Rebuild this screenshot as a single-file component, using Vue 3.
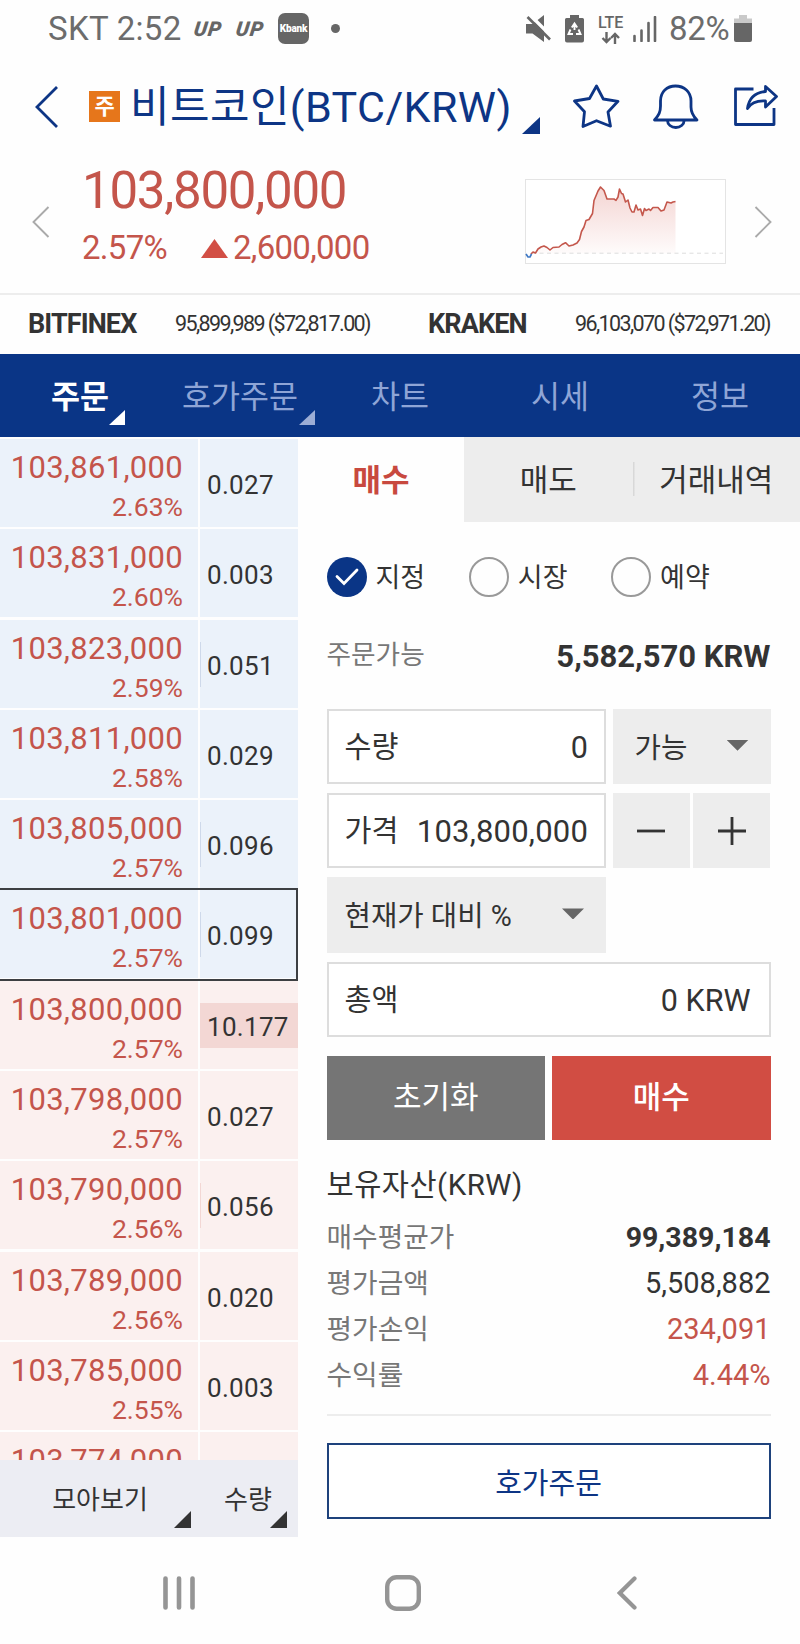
<template>
    <div class="phone">
        <div class="status-bar">
            <span class="carrier">SKT 2:52</span>
            <span class="up-logo">UP</span>
            <span class="up-logo second">UP</span>
            <span class="kbank">Kbank</span>
            <span class="dot"></span>
            <div class="status-right">
                <svg class="mute" width="26" height="28" viewBox="126 13.5 26 28">
                    <path d="M126 22.5h6.5l11.5-9v27l-11.5-8.500h-6.500z" fill="#666" />
                    <path d="M129 12.500l24 24" stroke="#fff" stroke-width="3.500" />
                    <path d="M127.500 15.500l22.500 22.500" stroke="#666" stroke-width="2.600" />
                </svg>
                <svg class="saver" width="19" height="28" viewBox="0 0 19 28">
                    <path d="M5 0h9v3h3.500q1.500 0 1.500 1.500v21q0 2-2 2h-15q-2 0-2-2v-21q0-1.500 1.500-1.500h3.500z" fill="#666" />
                    <path d="M6.800 12.500l2.700-4 2.700 4M13.500 14.500l2 4.500h-4.500M5.500 14.500l-2 4.500h4.500M9.500 10v5" fill="none" stroke="#fff" stroke-width="1.900" />
                </svg>
                <div class="lte">
                    <span>LTE</span>
                    <svg width="20" height="12" viewBox="0 0 20 12">
                        <path d="M5.500 0v9.500M1.500 6l4 4 4-4M14 12v-9.500M10 6l4-4 4 4" fill="none" stroke="#666" stroke-width="2.400" />
                    </svg>
                </div>
                <svg class="signal" width="24" height="26" viewBox="0 0 24 26">
                    <path d="M1.500 20v5M8.500 14.500v10.500M15.500 7v18M22 1v24" stroke="#666" stroke-width="2.600" stroke-linecap="round" />
                </svg>
                <span class="percent">82%</span>
                <svg class="battery" width="18" height="27" viewBox="0 0 18 27">
                    <path d="M5 0h8v3.500h5v5h-18v-5h5z" fill="#c9c9c9" />
                    <path d="M0 8h18v17q0 2-2 2h-14q-2 0-2-2z" fill="#666" />
                </svg>
            </div>
        </div>

        <div class="header">
            <svg class="back" width="24" height="42" viewBox="0 0 24 42">
                <path d="M22 1L2 21l20 20" fill="none" stroke="#0d3585" stroke-width="2.800" />
            </svg>
            <span class="market-tag">주</span>
            <h1>비트코인(BTC/KRW)</h1>
            <svg class="corner-title" width="18" height="17" viewBox="0 0 18 17"><path d="M18 0v17h-18z" fill="#0d3585" /></svg>
            <svg class="star" width="47" height="46" viewBox="172 83 47 46">
                <path d="M195.500 86l6.800 13 14.700 2.300-10 10.700 2.500 14.200-14-5.500-13.500 5.800 1.500-14.800-10-10.700 15-2.500z" />
            </svg>
            <svg class="bell" width="47" height="46" viewBox="252 83 47 46">
                <path d="M254.500 120C259 115 260.500 112 260.500 106V101C260.500 91.500 267 86 275.500 86S291 91.500 291 101V107C291 113 293 116 297 120Z" />
                <path d="M267.500 120.500a8.300 7 0 0 0 16.600 0" />
            </svg>
            <svg class="share" width="46" height="46" viewBox="333 83 46 46">
                <path d="M353.500 89H335.500V124.500H374V108" />
                <path d="M365.500 86.500L376.500 96.500L365.500 107V101C358 100.500 351 103 347.500 108.500C349 98 355 92.500 365.500 91.500Z" />
            </svg>
        </div>

        <div class="quote">
            <svg class="prev" width="18" height="32" viewBox="0 0 18 32">
                <path d="M16.500 1L1.500 16l15 15" fill="none" stroke="#aaa" stroke-width="1.900" />
            </svg>
            <div class="quote-text">
                <div class="quote-price">103,800,000</div>
                <div class="quote-change">
                    <span>2.57%</span>
                    <svg width="27" height="19" viewBox="0 0 27 19"><path d="M13.500 0L27 19H0z" fill="#d24f45" /></svg>
                    <span>2,600,000</span>
                </div>
            </div>
            <svg class="mini-chart" width="202" height="86" viewBox="125 178.500 202 86">
                <defs>
                    <linearGradient id="fade" x1="0" y1="0" x2="0" y2="1">
                        <stop offset="0" stop-color="#d24f45" stop-opacity="0.24" />
                        <stop offset="1" stop-color="#d24f45" stop-opacity="0.02" />
                    </linearGradient>
                </defs>
                <rect x="125.500" y="179" width="200" height="84" fill="#fff" stroke="#e4e4e4" />
                <path :d="chartLine + 'V253H132Z'" fill="url(#fade)" />
                <path d="M132 252.700H323" stroke="#ddd" stroke-dasharray="4 3.500" />
                <path :d="chartLine" fill="none" stroke="#c4574c" stroke-width="1.600" stroke-linejoin="round" />
                <path d="M126 253.500l2 3h2l1.500-3" fill="none" stroke="#3f78c4" stroke-width="1.700" />
            </svg>
            <svg class="next" width="18" height="32" viewBox="0 0 18 32">
                <path d="M1.500 1l15 15-15 15" fill="none" stroke="#aaa" stroke-width="1.900" />
            </svg>
        </div>

        <div class="exchanges">
            <div v-for="ex in exchanges" :key="ex.name" class="exchange">
                <b>{{ ex.name }}</b>
                <span>{{ ex.price }}</span>
            </div>
        </div>

        <div class="main-tabs">
            <div v-for="(tab, i) in mainTabs" :key="tab" class="main-tab" :class="{ active: i === 0 }">
                <span>{{ tab }}</span>
                <svg v-if="i < 2" class="tab-corner" :class="'corner-' + i" width="16" height="15" viewBox="0 0 16 15">
                    <path d="M16 0v15h-16z" fill="currentColor" />
                </svg>
            </div>
        </div>

        <div class="content">
            <div class="book">
                <div class="book-list">
                    <div v-for="row in orders" :key="row.price" class="book-row" :class="[row.side, { current: row.current }]">
                        <div class="price-cell">
                            <div class="price">{{ row.price }}</div>
                            <div class="rate">{{ row.rate }}</div>
                        </div>
                        <div class="qty-cell">
                            <div class="qty-bar" :style="{ width: barWidth(row.qty) }"></div>
                            <span>{{ row.qty }}</span>
                        </div>
                    </div>
                </div>
                <div class="book-footer">
                    <div class="group">모아보기<i class="fold"></i></div>
                    <div class="amount">수량<i class="fold"></i></div>
                </div>
            </div>

            <div class="order">
                <div class="order-tabs">
                    <div class="order-tab active">매수</div>
                    <div class="order-tab">매도</div>
                    <div class="order-tab history">거래내역</div>
                </div>

                <div class="form">
                    <div class="types">
                        <div v-for="(type, i) in orderTypes" :key="type" class="type" @click="selected = i">
                            <span class="radio" :class="{ checked: selected === i }">
                                <svg v-if="selected === i" width="24" height="18" viewBox="0 0 24 18">
                                    <path d="M2 8.500l7 7L22 2" fill="none" stroke="#fff" stroke-width="2.800" stroke-linecap="round" />
                                </svg>
                            </span>
                            <span class="type-label">{{ type }}</span>
                        </div>
                    </div>

                    <div class="available">
                        <span>주문가능</span>
                        <b>5,582,570 KRW</b>
                    </div>

                    <div class="field-row">
                        <div class="field"><span>수량</span><em>0</em></div>
                        <div class="select able"><span>가능</span><i class="caret"></i></div>
                    </div>
                    <div class="field-row">
                        <div class="field"><span>가격</span><em class="wide">103,800,000</em></div>
                        <div class="steps">
                            <button class="step" aria-label="minus">
                                <svg width="30" height="30" viewBox="0 0 30 30"><path d="M1 15h28" stroke="#333" stroke-width="2.800" /></svg>
                            </button>
                            <button class="step" aria-label="plus">
                                <svg width="30" height="30" viewBox="0 0 30 30"><path d="M1 15h28M15 1v28" stroke="#333" stroke-width="2.800" /></svg>
                            </button>
                        </div>
                    </div>
                    <div class="field-row">
                        <div class="select ratio"><span>현재가 대비 %</span><i class="caret"></i></div>
                    </div>
                    <div class="field-row">
                        <div class="field total"><span>총액</span><em>0 KRW</em></div>
                    </div>

                    <div class="actions">
                        <button class="reset">초기화</button>
                        <button class="buy">매수</button>
                    </div>

                    <div class="assets">
                        <h2>보유자산(KRW)</h2>
                        <div v-for="asset in assets" :key="asset.label" class="asset">
                            <span>{{ asset.label }}</span>
                            <span class="value" :class="asset.style">{{ asset.value }}</span>
                        </div>
                    </div>

                    <button class="quick">호가주문</button>
                </div>
            </div>
        </div>

        <div class="system-nav">
            <svg width="32" height="34" viewBox="0 0 32 34">
                <path d="M2.500 2.500v29M16 2.500v29M29.500 2.500v29" stroke="#959595" stroke-width="4.600" stroke-linecap="round" />
            </svg>
            <svg class="home" width="36" height="36" viewBox="0 0 36 36">
                <rect x="2.200" y="2.200" width="31.600" height="31.600" rx="9.500" fill="none" stroke="#959595" stroke-width="4.400" />
            </svg>
            <svg width="20" height="34" viewBox="0 0 20 34">
                <path d="M17.500 2.500L2.800 17l14.700 14.500" fill="none" stroke="#959595" stroke-width="4.200" stroke-linecap="round" />
            </svg>
        </div>
    </div>
</template>

<script setup>
import { ref } from 'vue';

const selected = ref(0);
const orderTypes = ['지정', '시장', '예약'];
const mainTabs = ['주문', '호가주문', '차트', '시세', '정보'];

const exchanges = [
    { name: 'BITFINEX', price: '95,899,989 ($72,817.00)' },
    { name: 'KRAKEN', price: '96,103,070 ($72,971.20)' },
];

const orders = [
    { price: '103,861,000', rate: '2.63%', qty: '0.027', side: 'ask' },
    { price: '103,831,000', rate: '2.60%', qty: '0.003', side: 'ask' },
    { price: '103,823,000', rate: '2.59%', qty: '0.051', side: 'ask' },
    { price: '103,811,000', rate: '2.58%', qty: '0.029', side: 'ask' },
    { price: '103,805,000', rate: '2.57%', qty: '0.096', side: 'ask' },
    { price: '103,801,000', rate: '2.57%', qty: '0.099', side: 'ask', current: true },
    { price: '103,800,000', rate: '2.57%', qty: '10.177', side: 'bid' },
    { price: '103,798,000', rate: '2.57%', qty: '0.027', side: 'bid' },
    { price: '103,790,000', rate: '2.56%', qty: '0.056', side: 'bid' },
    { price: '103,789,000', rate: '2.56%', qty: '0.020', side: 'bid' },
    { price: '103,785,000', rate: '2.55%', qty: '0.003', side: 'bid' },
    { price: '103,774,000', rate: '', qty: '', side: 'bid' },
];

const assets = [
    { label: '매수평균가', value: '99,389,184', style: 'bold' },
    { label: '평가금액', value: '5,508,882', style: '' },
    { label: '평가손익', value: '234,091', style: 'red' },
    { label: '수익률', value: '4.44%', style: 'red' },
];

const maxQty = Math.max(...orders.map((row) => Number(row.qty)));

function barWidth(qty) {
    return Math.round((Number(qty) / maxQty) * 100) + '%';
}

const chartLine =
    'M131 253.500L133 251.500L135.500 252.500L138 248.500L141 246.500L144 245.500L147 247L150 249.500L153 247L159 246.500L162 244L165.500 242.200' +
    'L169 245.500L173 244.500L177 242.500L179.500 239L181.500 231L184 226.500L186 220L189 219L192.500 213L194 200L198 190.500L200.500 186.500' +
    'L204 190L207 198.500L214 198.500L216 199.800L218 196.500L219.500 188.500L221.500 193L223 193.500L225.500 201.500L228 199.500L230 207.500' +
    'L232 211.500L234 211.500L236 204.500L238 209.500L240.500 208.500L242.500 215L244.500 208L246 210L249 208.500L250.500 210L253 207' +
    'L258 207L261 210.500L264 209.500L267 201.500L271 202.500L273 201.500L275.500 201';
</script>

<style>
body {
    margin: 0;
    background: #fefefe;
}
</style>

<style scoped>
.phone {
    width: 800px;
    height: 1644px;
    overflow: hidden;
    display: flex;
    flex-direction: column;
    background: #fefefe;
    color: #333;
    font-family: Roboto, "Noto Sans CJK KR", sans-serif;
}

.phone * {
    box-sizing: border-box;
}

svg {
    display: block;
    flex-shrink: 0;
}

button {
    border: 0;
    padding: 0;
    font-family: inherit;
}

.status-bar {
    height: 59px;
    display: flex;
    align-items: center;
    padding: 0 48px;
    color: #6c6c6c;
    font-size: 33px;
    line-height: 57px;
    flex-shrink: 0;
    padding-bottom: 2px;
}

.carrier {
    width: 146px;
    white-space: nowrap;
    letter-spacing: 0.3px;
}

.up-logo {
    width: 42px;
    font-size: 20.5px;
    font-weight: 900;
    font-style: italic;
    line-height: 30px;
    letter-spacing: 1px;
    color: #666;
    transform: skewX(-8deg);
}

.kbank {
    width: 31px;
    height: 31px;
    border-radius: 7px;
    background: #666;
    color: #fff;
    font-size: 10px;
    font-weight: 900;
    line-height: 31px;
    text-align: center;
    letter-spacing: -0.2px;
}

.dot {
    width: 9px;
    height: 9px;
    border-radius: 50%;
    margin-left: 22px;
    background: #666;
}

.status-right {
    margin-left: auto;
    display: flex;
    align-items: center;
}

.saver {
    margin-left: 13px;
}

.lte {
    width: 27px;
    margin: 0 8px 0 14px;
    height: 28px;
    font-size: 16px;
    font-weight: 500;
    line-height: 15px;
    color: #666;
}

.lte span {
    display: block;
    letter-spacing: -0.1px;
}

.lte svg {
    margin: 2px 0 0 3px;
}

.signal {
    margin-right: 12px;
}

.percent {
    width: 65px;
    white-space: nowrap;
    letter-spacing: -0.3px;
}

.header {
    height: 97px;
    display: flex;
    align-items: center;
    padding: 0 0 2px 35px;
    flex-shrink: 0;
}

.market-tag {
    width: 31px;
    height: 31px;
    margin-left: 30px;
    background: #e6761b;
    color: #fff;
    font-size: 22px;
    font-weight: 700;
    line-height: 31px;
    text-align: center;
}

h1 {
    margin: 0 0 0 10px;
    width: 392px;
    font-size: 43px;
    font-weight: 400;
    line-height: 96px;
    letter-spacing: 0.4px;
    white-space: nowrap;
    color: #0d3585;
}

.corner-title {
    margin-top: 37px;
}

.star,
.bell,
.share {
    fill: none;
    stroke: #0d3585;
    stroke-width: 2.8;
    stroke-linejoin: round;
    margin-top: -2px;
}

.star {
    margin-left: 33px;
}

.bell {
    margin-left: 32px;
}

.share {
    margin-left: 34px;
}

.quote {
    height: 139px;
    display: flex;
    align-items: center;
    padding: 0 28px 6px 32px;
    border-bottom: 2px solid #ededed;
    flex-shrink: 0;
}

.quote-text {
    margin: -6px 0 0 32px;
    width: 443px;
    color: #c4554b;
}

.quote-price {
    font-size: 51px;
    line-height: 58px;
    letter-spacing: -1.25px;
}

.quote-change {
    display: flex;
    align-items: center;
    font-size: 33px;
    line-height: 56px;
    letter-spacing: -0.7px;
}

.quote-change svg {
    margin: 1px 5px 0 34px;
}

.next {
    margin-left: auto;
}

.exchanges {
    height: 59px;
    display: flex;
    flex-shrink: 0;
}

.exchange {
    width: 400px;
    display: flex;
    justify-content: space-between;
    padding: 0 30px 0 28px;
    line-height: 58px;
    white-space: nowrap;
}

.exchange b {
    font-size: 27px;
    letter-spacing: -0.9px;
}

.exchange span {
    font-size: 21.5px;
    letter-spacing: -1.6px;
}

.main-tabs {
    height: 83px;
    display: flex;
    background: #0a3586;
    flex-shrink: 0;
}

.main-tab {
    position: relative;
    width: 160px;
    color: #8fa5d6;
    font-size: 31.5px;
    line-height: 88px;
    text-align: center;
}

.main-tab.active {
    color: #fff;
    font-weight: 700;
}

.tab-corner {
    position: absolute;
    top: 56px;
}

.corner-0 {
    left: 109px;
}

.corner-1 {
    left: 139px;
    color: #9cadd5;
}

.content {
    height: 1100px;
    display: flex;
    flex-shrink: 0;
}

.book {
    width: 298px;
    display: flex;
    flex-direction: column;
    flex-shrink: 0;
}

.book-list {
    height: 1023px;
    padding-top: 2px;
    overflow: hidden;
}

.book-row {
    position: relative;
    display: flex;
    gap: 2px;
    height: 90.3px;
    padding-bottom: 2.3px;
}

.book-row.current::after {
    content: "";
    position: absolute;
    top: -2px;
    bottom: 0;
    left: -2px;
    right: 0;
    border: 2px solid #3c3f42;
}

.price-cell {
    width: 198px;
    padding: 10px 15px 0 0;
    text-align: right;
    color: #c4554b;
}

.ask > div {
    background: #ebf2fa;
}

.bid > div {
    background: #fbf0ef;
}

.price {
    font-size: 31px;
    line-height: 38px;
    letter-spacing: 0.3px;
}

.rate {
    font-size: 26.5px;
    line-height: 39px;
}

.qty-cell {
    position: relative;
    width: 98px;
    padding-left: 7px;
    font-size: 26px;
    line-height: 93px;
    letter-spacing: 0.3px;
}

.qty-cell span {
    position: relative;
}

.qty-bar {
    position: absolute;
    top: 22px;
    left: 0;
    height: 45px;
}

.ask .qty-bar {
    background: #ced9ea;
}

.bid .qty-bar {
    background: #f3d7d4;
}

.book-footer {
    height: 77px;
    display: flex;
    background: #ecedf3;
    font-size: 26px;
    line-height: 81px;
    text-align: center;
}

.group {
    position: relative;
    width: 200px;
}

.amount {
    position: relative;
    width: 98px;
    padding-right: 2px;
}

.fold {
    position: absolute;
    right: 9px;
    bottom: 9px;
    width: 17px;
    height: 17px;
    background: #333;
    clip-path: polygon(100% 0, 100% 100%, 0 100%);
}

.amount .fold {
    right: 11px;
}

.order {
    flex: 1;
}

.order-tabs {
    display: flex;
    height: 84.5px;
    background: #ededed;
}

.order-tab {
    width: 168.5px;
    font-size: 31px;
    line-height: 87px;
    text-align: center;
}

.order-tab.active {
    width: 166px;
    background: #fefefe;
    color: #c8493f;
    font-weight: 700;
}

.history {
    width: 167.5px;
    background: linear-gradient(#d8d8d8, #d8d8d8) 0 25px / 1.5px 34px no-repeat;
}

.form {
    width: 444px;
    margin-left: 28.5px;
}

.types {
    display: flex;
    padding-top: 35px;
}

.type {
    width: 142.3px;
    display: flex;
    align-items: center;
    gap: 9px;
    font-size: 27px;
    line-height: 42px;
    height: 40px;
}

.type-label {
    padding-top: 2px;
}

.radio {
    width: 40px;
    height: 40px;
    border: 2px solid #999;
    border-radius: 50%;
    display: flex;
    align-items: center;
    justify-content: center;
}

.radio.checked {
    border: 0;
    background: #0a3586;
}

.available {
    display: flex;
    justify-content: space-between;
    margin: 31px 0 25px;
    height: 56px;
    line-height: 54px;
    font-size: 26.7px;
    color: #777;
}

.available b {
    font-size: 31px;
    line-height: 58px;
    color: #333;
}

.field-row {
    display: flex;
    gap: 6.5px;
    margin-bottom: 9px;
}

.field {
    width: 279.5px;
    height: 75.4px;
    border: 2px solid #ddd;
    display: flex;
    justify-content: space-between;
    padding: 0 16px;
    font-size: 29.3px;
    line-height: 73px;
    background: #fff;
}

.field em {
    font-style: normal;
    font-size: 30.5px;
}

.field em.wide {
    letter-spacing: 0.2px;
    font-size: 31px;
}

.field.total {
    width: 444px;
    padding-right: 18px;
}

.select {
    height: 75.4px;
    display: flex;
    align-items: center;
    justify-content: space-between;
    background: #ededed;
    padding: 0 22px 2px 18px;
    font-size: 28.7px;
}

.able {
    width: 158px;
    padding-left: 22px;
}

.ratio {
    width: 279.5px;
}

.caret {
    width: 22px;
    height: 11px;
    background: #666;
    clip-path: polygon(0 0, 100% 0, 50% 100%);
}

.steps {
    display: flex;
    gap: 2.5px;
}

.step {
    width: 77.7px;
    background: #ededed;
    display: flex;
    align-items: center;
    justify-content: center;
}

.actions {
    display: flex;
    gap: 7px;
    margin-top: 18.5px;
}

.actions button {
    width: 218.5px;
    height: 84.5px;
    color: #fff;
    font-size: 31px;
    line-height: 84px;
}

.actions .reset {
    background: #757575;
}

.actions .buy {
    background: #d14d43;
    font-weight: 500;
}

.assets {
    padding: 24px 0;
    border-bottom: 2px solid #ededed;
}

h2 {
    margin: 0;
    font-size: 29.5px;
    font-weight: 400;
    line-height: 42px;
    letter-spacing: 0.5px;
}

.asset {
    display: flex;
    justify-content: space-between;
    height: 46px;
    line-height: 63px;
    font-size: 27.8px;
    color: #777;
}

.value {
    font-size: 29px;
    color: #333;
}

.value.bold {
    font-size: 28.5px;
    font-weight: 700;
}

.value.red {
    color: #c4554b;
}

.quick {
    width: 444px;
    height: 75.5px;
    margin-top: 27px;
    border: 2px solid #1e427c;
    background: #fff;
    color: #0d3585;
    font-size: 29px;
}

.system-nav {
    flex: 1;
    display: flex;
    align-items: center;
    justify-content: space-between;
    padding: 4px 163px 0;
}

.home {
    margin-right: 6px;
}
</style>
